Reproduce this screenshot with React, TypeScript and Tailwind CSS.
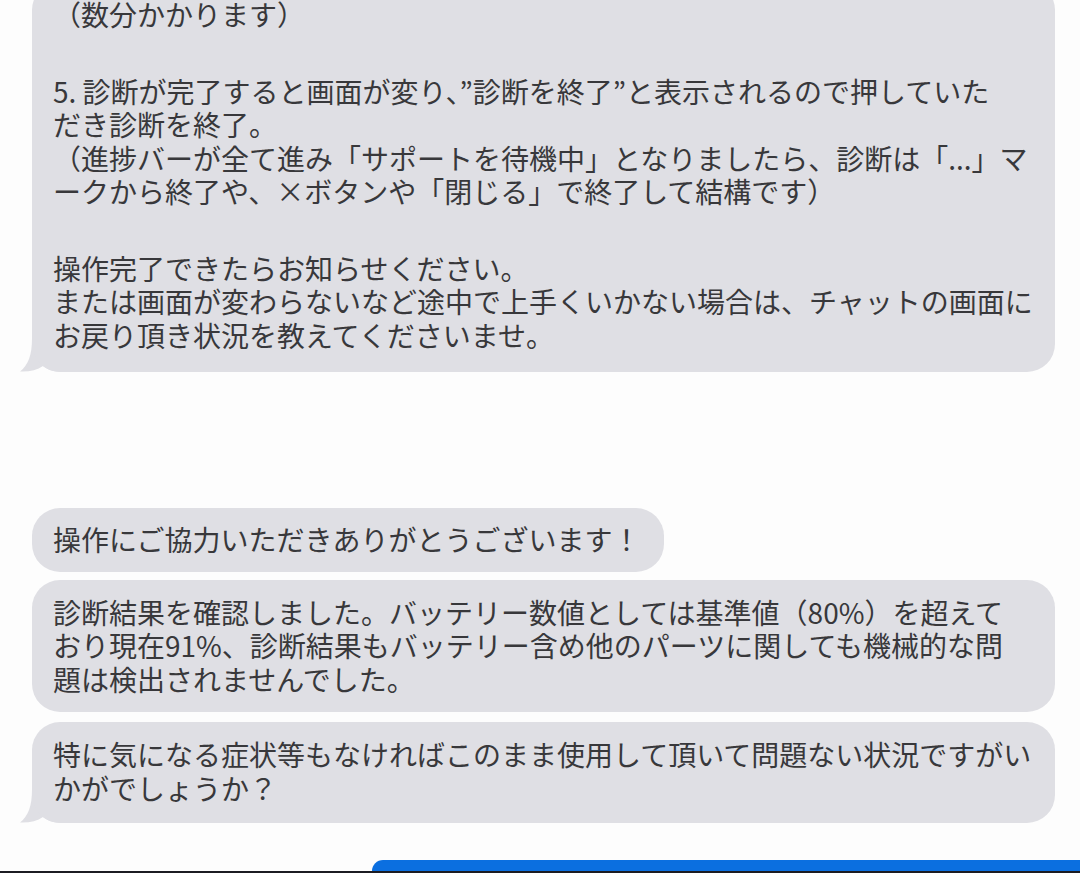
import React from "react";

const font = {
  fontFamily: '"Noto Sans CJK JP", "Noto Sans", sans-serif',
};

function Tail() {
  return (
    <svg
      className="absolute -left-[12px] bottom-0"
      width="44"
      height="34"
      viewBox="0 0 44 34"
    >
      <path
        d="M12 0 C12 18 8 27 0 33.5 C9 34 17 32 23 28 C27 31 32 34 44 34 L44 0 Z"
        fill="#dfdfe4"
      />
    </svg>
  );
}

function Bubble({
  lines,
  tail,
  wide = true,
  className = "",
  pad = "py-4 pr-[30px]",
}: {
  lines: (string | null)[];
  tail?: boolean;
  wide?: boolean;
  className?: string;
  pad?: string;
}) {
  return (
    <div className={`relative ml-[32px] ${wide ? "w-[1023px]" : "w-fit"} ${className}`}>
      {tail && <Tail />}
      <div
        className={`relative rounded-[28px] bg-[#dfdfe4] pl-[21px] ${pad} text-[28px] leading-[33.5px] text-[#38383b]`}
      >
        {lines.map((l, i) =>
          l === null ? (
            <div key={i} className="h-[43px]" />
          ) : (
            <div key={i} className="whitespace-nowrap">
              {l}
            </div>
          )
        )}
      </div>
    </div>
  );
}

export default function App() {
  return (
    <div className="w-[1080px] h-[873px] overflow-hidden bg-[#fdfdfd] flex flex-col" style={font}>
      <Bubble
        className="-mt-[18px]"
        pad="pt-4 pb-5 pr-[30px]"
        tail
        lines={[
          "（数分かかります）",
          null,
          "5. 診断が完了すると画面が変り、”診断を終了”と表示されるので押していた",
          "だき診断を終了。",
          "（進捗バーが全て進み「サポートを待機中」となりましたら、診断は「...」マ",
          "ークから終了や、×ボタンや「閉じる」で終了して結構です）",
          null,
          "操作完了できたらお知らせください。",
          "または画面が変わらないなど途中で上手くいかない場合は、チャットの画面に",
          "お戻り頂き状況を教えてくださいませ。",
        ]}
      />

      <Bubble
        wide={false}
        className="mt-[136px]"
        pad="py-[15px] pr-[24px]"
        lines={["操作にご協力いただきありがとうございます！"]}
      />

      <Bubble
        className="mt-[8px]"
        lines={[
          "診断結果を確認しました。バッテリー数値としては基準値（80%）を超えて",
          "おり現在91%、診断結果もバッテリー含め他のパーツに関しても機械的な問",
          "題は検出されませんでした。",
        ]}
      />

      <Bubble
        className="mt-[10px]"
        pad="pt-4 pb-[18px] pr-[30px]"
        tail
        lines={[
          "特に気になる症状等もなければこのまま使用して頂いて問題ない状況ですがい",
          "かがでしょうか？",
        ]}
      />

      <div className="flex-1" />
      <div className="ml-[372px] h-[11px] rounded-tl-[24px] bg-[#0b6fe0]" />
      <div className="h-[2px] bg-[#1c1c22]" />
    </div>
  );
}
